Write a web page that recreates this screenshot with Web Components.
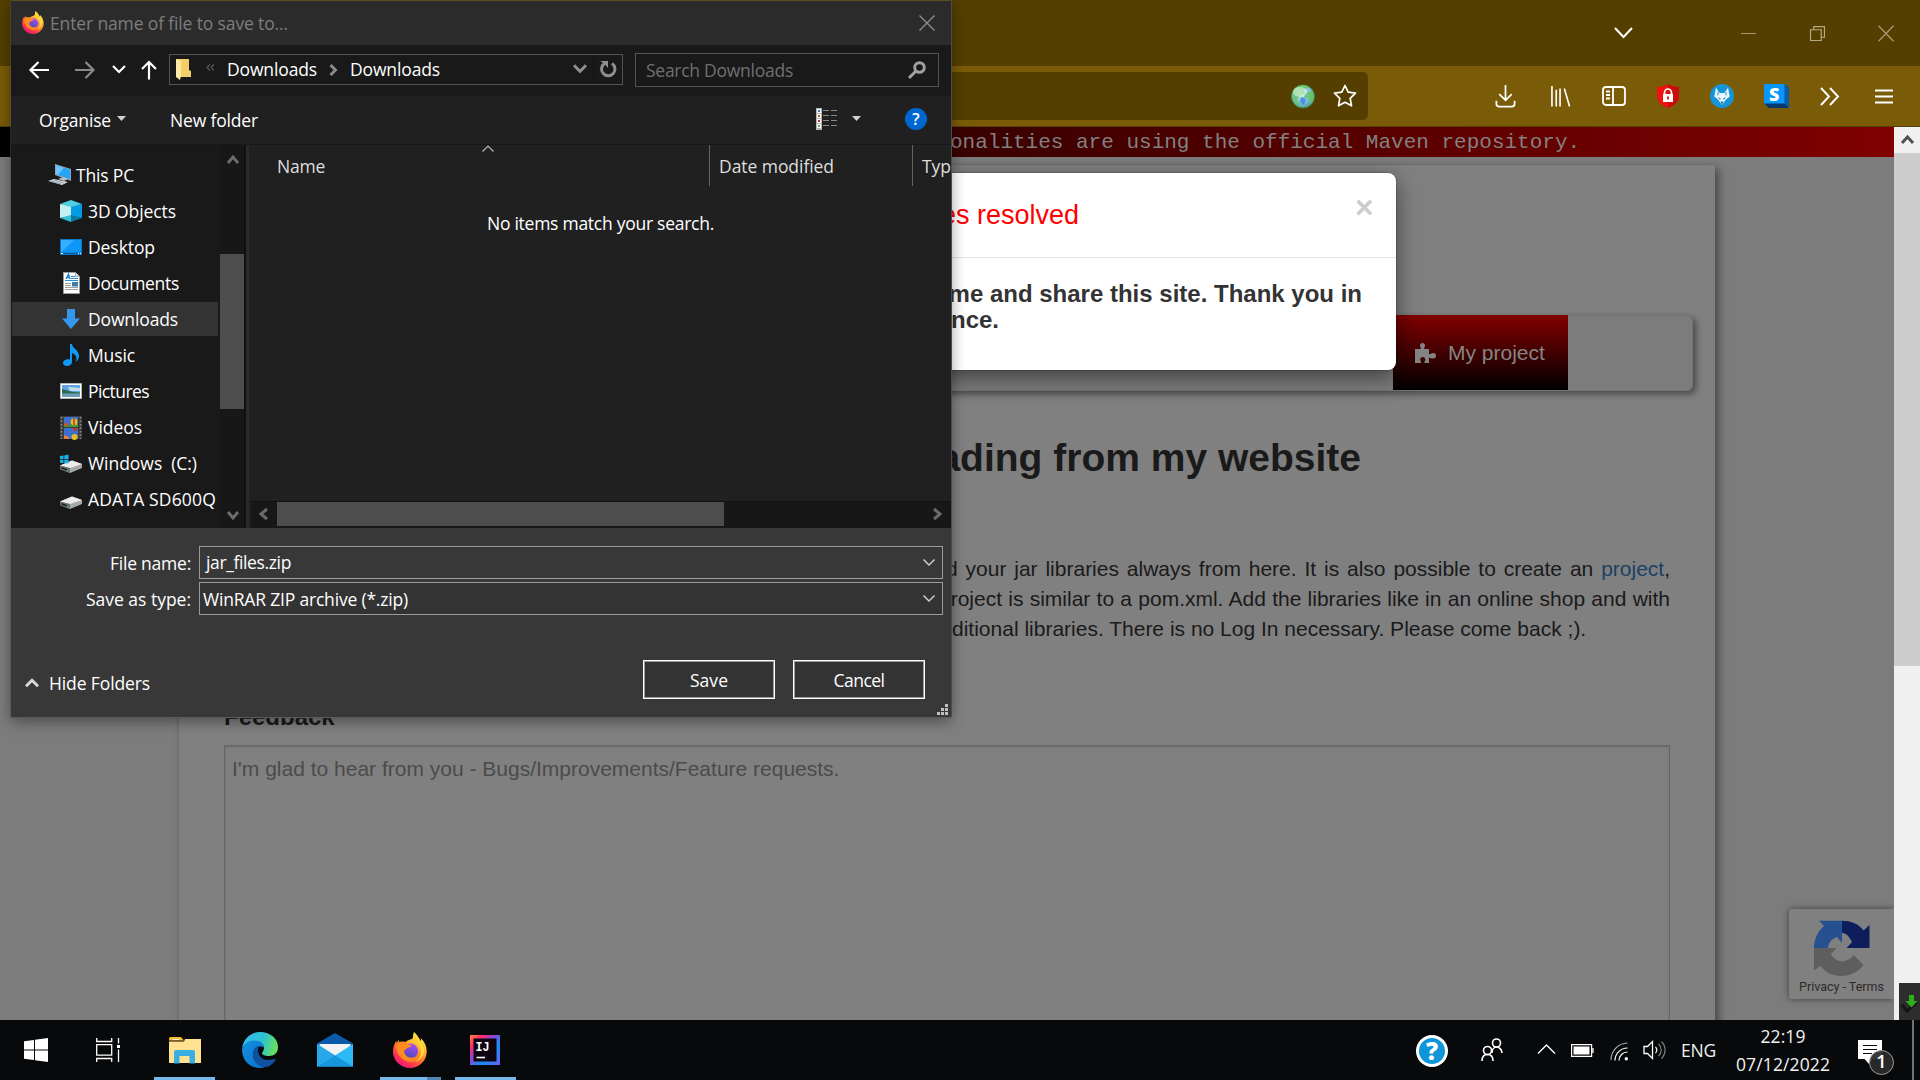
<!DOCTYPE html>
<html lang="en">
<head>
<meta charset="utf-8">
<title>Save file</title>
<style>
html,body{margin:0;width:1920px;height:1080px;overflow:hidden;background:#07090b}
body{font-family:"Open Sans","Noto Sans",sans-serif;font-size:17.5px}
</style>
</head>
<body>
<desk-top></desk-top>
<script>
const define = (name, html) => {
  const t = document.createElement('template');
  t.innerHTML = '<style>*{box-sizing:border-box}:host{box-sizing:border-box}</style>' + html;
  customElements.define(name, class extends HTMLElement {
    constructor() {
      super();
      this.attachShadow({mode: 'open'}).appendChild(t.content.cloneNode(true));
    }
  });
};

const fox = `<svg viewBox="0 0 34 36"><defs>
<linearGradient id="a" x1=".85" y1="0" x2=".2" y2="1"><stop offset="0" stop-color="#fff44f"/><stop offset=".3" stop-color="#ffc130"/><stop offset=".55" stop-color="#ff7a28"/><stop offset=".8" stop-color="#ff2f52"/><stop offset="1" stop-color="#d9118c"/></linearGradient>
<linearGradient id="b" x1=".7" y1="0" x2=".3" y2="1"><stop offset="0" stop-color="#a84cf5"/><stop offset="1" stop-color="#4a4bb8"/></linearGradient></defs>
<path d="M21 0C25 3 26 7 28 9c0-2-.3-3-.3-3 4 4 6 8 6 13.500C33.700 29 26 36 17 36S0 29 0 19.500C0 15 1.500 11 3.500 8.500c0 1.500.2 2.500.2 2.500L6 7.500c-.2 1.800 0 2.500 0 2.500 2-.6 4-.3 6 .5C15 7 20 8 20 5c0-2 .3-3.500 1-5z" fill="url(#a)"/>
<circle cx="17.500" cy="19" r="7.600" fill="url(#b)"/>
<path d="M3 14c2-4 7-5.500 10.500-3.500C14.500 12.500 17 13 19 13c-.5 2-3.500 2.500-5 3.200-1 .6-1.200 2-3 2.300 0 4 3.500 7.500 8 7.200 4-.3 6-3 7.500-3-1.500 5-5.500 7.500-10 7C9 29 4 23 3 14z" fill="#ff8a1f"/>
<path d="M24 9c4 4 5 9 3.500 14-1.600 4-4 6-6 7 5-1 9-5 9.500-10C31.400 15 28.500 11 24 9z" fill="#ffe14a" opacity=".75"/></svg>`;
const helpQ = (f,r,fs,ring) => `<svg viewBox="0 0 34 34"><circle cx="17" cy="17" r="${r}" fill="${f}" ${ring?'stroke="#fff" stroke-width="3"':''}/><text x="17" y="${17+fs*.37}" text-anchor="middle" fill="#fff" font-family="Open Sans" font-weight="${ring?800:600}" font-size="${fs}">?</text></svg>`;
const chev = (d,c,w,vb) => `<svg viewBox="${vb}"><path d="${d}" fill="none" stroke="${c}" stroke-width="${w}"/></svg>`;
const drive = `<path d="M0 13.500 12 8.500l10 3.500v4L10 21 0 17z" fill="#a9a9a9"/><path d="M0 13.500 12 8.500l10 3.500-12 4z" fill="#ececec"/><path d="M0 13.500v3.500l10 4v-5z" fill="#6d7271"/><path d="M1.500 15.800l6.500 2.400" stroke="#1d2420" stroke-width="1.600"/><circle cx="7.500" cy="18.300" r=".8" fill="#5c5"/>`;
const ICONS = {
  fox,
  back: chev('M9.500 1 1.500 9l8 8M2 9h18','#fff',2.2,'0 0 20 18'),
  fwd: chev('M10.500 1l8 8-8 8M0 9h18','#8a8a8a',2.2,'0 0 20 18'),
  up: chev('M1 9l7-7 7 7M8 2v17.500','#fff',2.2,'0 0 16 20'),
  down: chev('M1 1l6 6 6-6','#fff',2.2,'0 0 14 9'),
  downG: chev('M1 1.300l6 6 6-6','#8f8f8f',3,'0 0 14 10'),
  upL: chev('M1 8.300l6-6 6 6','#d8d8d8',3,'0 0 14 10'),
  thin: chev('M.5.5 6 6 11.500.5','#d4d4d4',1.4,'0 0 12 8'),
  sort: chev('M.5 6.500 6 1l5.500 5.500','#b8b8b8',1.2,'0 0 12 8'),
  sbUp: chev('M1 9l5-6 5 6','#6b6b6b',3,'0 0 12 11'),
  sbDn: chev('M1 2l5 6 5-6','#6b6b6b',3,'0 0 12 11'),
  sbL: chev('M9 1 3 6l6 5','#6b6b6b',3,'0 0 11 12'),
  sbR: chev('M2 1l6 5-6 5','#6b6b6b',3,'0 0 11 12'),
  crumb: chev('M1.500 1l5 5-5 5','#8a8a8a',3,'0 0 9 12'),
  lt2: chev('M4 .5 1 3.500l3 3M8 .5 5 3.500l3 3','#5c5c5c',1.1,'0 0 9 7'),
  x: chev('M.5.5l15 15M15.500.5l-15 15','#909090',1.2,'0 0 16 16'),
  xw: chev('M.5.500l15 15.500M15.500.5.500 16','#a89a70',1.3,'0 0 16 16.500'),
  refresh: `<svg viewBox="0 0 17 18"><path d="M12 3.500a6.700 6.700 0 1 1-7.500 0" fill="none" stroke="#8f8f8f" stroke-width="3"/><path d="M.5 1h7.500v7L5.500 5z" fill="#8f8f8f"/></svg>`,
  search: `<svg viewBox="0 0 18 18"><circle cx="11.500" cy="6.500" r="4.800" fill="none" stroke="#a0a0a0" stroke-width="3"/><path d="M8 10 1 17" stroke="#a0a0a0" stroke-width="3"/></svg>`,
  folder: `<svg viewBox="0 0 15 21"><path d="M0 0h13v11l2 1v6H4z" fill="#f3cf69"/><path d="M0 0l5 2v15l-1 4-4-3z" fill="#ffe9a6"/></svg>`,
  caret: `<svg viewBox="0 0 9 5"><path d="M0 0h9L4.500 5z" fill="#d0d0d0"/></svg>`,
  view: `<svg viewBox="0 0 22 22"><path d="M0 0h6v22H0z" fill="#b4b4b4"/><path d="M1 1h4v4H1zM1 6h4v4H1zM1 11h4v4H1zM1 16h4v4H1z" fill="#fff"/><path d="M2 2h2v2H2z" fill="#3779b5"/><path d="M2 7h2v2H2z" fill="#9a6a30"/><path d="M2 12h2v2H2z" fill="#c03020"/><path d="M2 17h2v2H2z" fill="#7ca45c"/><path d="M7 2.500h6m2 0h6M7 7.500h6m2 0h6M7 12.500h6m2 0h6M7 17.500h6m2 0h6" stroke="#8b8b8b"/></svg>`,
  help: helpQ('#0067d0',17,25,false),
  pc: `<svg viewBox="0 0 23 22"><path d="M7 0l16 5v12L7 11z" fill="#8fa6b8"/><path d="M8 1.300l14 4.400v9.500L8 10z" fill="#27a3f7"/><path d="M8 1.300l8 2.500-6 7L8 10z" fill="#6cc4fb"/><path d="M10 15l5-2 5 2-4 2z" fill="#b5bcc4"/><path d="M0 17l6-2 14 3-6 3z" fill="#d7dde2"/><path d="M3 17l10 3M6 16l10 3" stroke="#7e8890" stroke-width=".8"/></svg>`,
  cube: `<svg viewBox="0 0 22 22"><path d="M0 4 11 0l11 4-11 4z" fill="#4fd0e2"/><path d="M0 4l11 3v9L0 18z" fill="#c4f0f3"/><path d="M22 4 11 7v9l11 2z" fill="#049be0"/><path d="M0 18l11-3v7z" fill="#33bfd4"/><path d="M22 18l-11-3v7z" fill="#067a9f"/></svg>`,
  desk: `<svg viewBox="0 0 22 16"><path d="M0 0h22v16H0z" fill="#0b76c6"/><path d="M1 1h20v12.500H1z" fill="#0d97fb"/><path d="M1 13.500V1h13z" fill="#35aefe"/><path d="M1 14h20v1H1z" fill="#045a9d"/><path d="M1 14h2v1H1zM18 14h1v1h-1zM20 14h1v1h-1z" fill="#fff"/></svg>`,
  doc: `<svg viewBox="0 0 17 22"><path d="M.5.500h12l4 4v17H.5z" fill="#fff" stroke="#9b9b9b"/><path d="M12.500.5v4h4" fill="#ddd" stroke="#999" stroke-width=".7"/><path d="M3 7 5.500 2 7 7M4 5.500h3" stroke="#1c7ed0" stroke-width="1.300" fill="none"/><path d="M8 4.500h4M8 6.500h7M2 8.500h13" stroke="#2b8fd8"/><path d="M2 11.500h6m-6 2h6m-6 2h13m-13 2h13" stroke="#a0a0a0"/><path d="M9 10h6v4.500H9z" fill="#3d7eae"/></svg>`,
  dl: `<svg viewBox="0 0 18 20"><path d="M5 0h8v9.500h5L9 20 0 9.500h5z" fill="#3398ec"/></svg>`,
  music: `<svg viewBox="0 0 17 22"><path d="M7 0h2c0 4 7 6 7 12 0 2-1 4-3 6 1-5 .5-7-4-9v8.500C9 20.500 6.500 22 4 22c-2.300 0-4-1-4-3 0-2.500 3.500-4.500 7-3.500z" fill="#0d99f5"/></svg>`,
  pic: `<svg viewBox="0 0 22 16"><path d="M.5.500h21v15H.5z" fill="#fff" stroke="#b5b5b5"/><path d="M2 2h18v12H2z" fill="#5fa5e4"/><path d="M8 4l12 1v3H10z" fill="#c3def2"/><path d="M2 6c5 1 8 3 18 3.500V11H2z" fill="#2e6b4e"/><path d="M2 10.500h18V14H2z" fill="#6e9fb5"/></svg>`,
  vid: `<svg viewBox="0 0 22 23"><path d="M0 0h22v23H0z" fill="#3c3c3c"/><path d="M1.500 1v22M20.500 1v22" stroke="#8a8a8a" stroke-width="1.600" stroke-dasharray="1.500 2"/><path d="M4 1h14v10H4zM4 12h14v11H4z" fill="#3c6fd0"/><path d="M4 8l3-1 3 2 8-1v3H4z" fill="#3a9a3a"/><circle cx="14" cy="6" r="3.400" fill="#e9c01a"/><path d="M14 2.600v7" stroke="#b33" stroke-width="1.500"/><circle cx="6" cy="8.500" r="1.700" fill="#e8452c"/><path d="M12 12h6l-3 4z" fill="#b83a20"/><circle cx="14.500" cy="21" r="3" fill="#e9c01a"/><path d="M4 19l5 2v2H4z" fill="#e9803c"/></svg>`,
  winc: `<svg viewBox="0 0 22 22">${drive}<path d="M0 5.500l3.500-.5v3.500H0zM4.300 4.900 8.500 4v4.500H4.300zM0 9.300h3.500v3.300L0 12.200zM4.300 9.300h4.200V13l-4.200-.6z" transform="translate(0 -1.500)" fill="#14b5ee"/></svg>`,
  drv: `<svg viewBox="0 0 22 22">${drive}</svg>`,
  grip: `<svg viewBox="0 0 11 11"><path d="M8 0h3v3H8zM4 4h3v3H4zM8 4h3v3H8zM0 8h3v3H0zM4 8h3v3H4zM8 8h3v3H8z" fill="#c0c0c0"/></svg>`,
  chevW: chev('M1 1l8.500 9L18 1','#fff',2,'0 0 19 12'),
  min: chev('M0 .5h15','#a89a70',1,'0 0 15 1'),
  restore: chev('M.5 3.500h10v10H.5zM3.500 3V.5h10v10H11','#b5a981',1.1,'0 0 14 14'),
  globe: `<svg viewBox="0 0 24 25"><defs><radialGradient id="g" cx=".4" cy=".35" r=".7"><stop offset="0" stop-color="#cdeef5"/><stop offset=".6" stop-color="#7cbfe0"/><stop offset="1" stop-color="#4d9a9c"/></radialGradient></defs><circle cx="12" cy="12.500" r="11.500" fill="url(#g)" stroke="#477f36"/><path d="M3 5c5-5 12-5 15-2l-5 3 1 4-5 2-3 4 4 6C3 21-1 12 3 5zM14 9l7-2c3 4 2 10-1 13l-3-6-4 0z" fill="#62c65c" opacity=".8"/><path d="M10 13l5 2-2 6-4-3z" fill="#4a91d6"/><ellipse cx="9" cy="8" rx="7" ry="5" fill="#fff" opacity=".45"/></svg>`,
  star: `<svg viewBox="0 0 24 24"><path d="M12 1.500l3.200 6.700 7.300 1-5.300 5.200 1.300 7.400-6.500-3.500-6.500 3.500 1.300-7.400L1.500 9.200l7.300-1z" fill="none" stroke="#fff" stroke-width="1.700" stroke-linejoin="round"/></svg>`,
  dlB: chev('M10.500 0v16M4 9.500l6.500 6.500L17 9.500M1 16.500v3a3 3 0 0 0 3 3h13a3 3 0 0 0 3-3v-3','#fff',1.800,'0 0 21 24'),
  lib: chev('M1 0v21.500M5.500 4v17.500M9.500 2.500v19M14 2.500l5.500 19','#fff',1.700,'0 0 21 22'),
  side: chev('M4 1h16a3 3 0 0 1 3 3v12a3 3 0 0 1-3 3H4a3 3 0 0 1-3-3V4a3 3 0 0 1 3-3zM11 1v18M4 5.500h4M4 9h4M4 12.500h4','#fff',1.800,'0 0 24 20'),
  shield: `<svg viewBox="0 0 22 24"><path d="M11 0c3 2 7 3 11 3v9c0 6-5 9.500-11 12C5 21.500 0 18 0 12V3c4 0 8-1 11-3z" fill="#f01010"/><path d="M11 0c3 2 7 3 11 3v9c0 6-5 9.500-11 12z" fill="#c90d0d"/><path d="M6 10h10v8H6z" fill="#fff"/><path d="M7.500 10V8.500a3.500 3.500 0 0 1 7 0V10" fill="none" stroke="#fff" stroke-width="1.700"/><path d="M11 12.500v3" stroke="#d11" stroke-width="1.800"/></svg>`,
  wolf: `<svg viewBox="0 0 24 24"><circle cx="12" cy="12" r="12" fill="#1595d8"/><path d="M6 3.500l3.500 5.500h5L18 3.500l1.700 9-3.700 3L12 21l-4-5.500-3.700-3z" fill="#e9f5fc"/><path d="M7.500 7l1.700 3-2 2zM16.500 7l-1.700 3 2 2z" fill="#58aede"/><path d="M8 13l2.700 1.500-.5 1.500zM16 13l-2.700 1.500.5 1.500zM12 21l-1.500-3.500h3z" fill="#1b6ca3"/></svg>`,
  sIcon: `<svg viewBox="0 0 25 24"><path d="M0 0h20l5 3.500V24H5L0 19.500z" fill="#075cad"/><path d="M5 24l-5-5h20l5 5z" fill="#06386b"/><path d="M0 0h20.500v19.500H0z" fill="#0796fb"/><text x="10.300" y="16.500" text-anchor="middle" font-family="Open Sans" font-weight="800" font-size="18" fill="#fff">S</text></svg>`,
  more: chev('M1 1l8 8.500L1 18M10 1l8 8.500L10 18','#fff',1.900,'0 0 20 19'),
  menu: chev('M0 1.500h18M0 7.500h18M0 13.500h18','#fff',1.900,'0 0 18 15'),
  pgUp: chev('M1 9l5.500-6L12 9','#505050',3,'0 0 13 11'),
  puzzle: `<svg viewBox="0 0 21 20"><path d="M0 6h5.500C6.500 5 5 4 5 2.500 5 1 6 0 7.500 0S10 1 10 2.500C10 4 8.500 5 9.500 6H14v5c1 1 2-1 4-1 2 0 3 1 3 2.700S20 15.500 18 15.500c-2 0-3-1.500-4-.5v5H9.500c-.5-1 .8-2 .8-3.500S9.200 14 7.800 14s-2.600 1-2.600 2.500S6.500 19 6 20H0z" fill="#848484"/></svg>`,
  captcha: `<svg viewBox="0 0 56 56"><path d="M5 .7h23V23l-5-6c-5 2-8.500 5-9 11H0C0 19 4 11 10 6z" fill="#26508f"/><path d="M28 .7C37 .7 45 4 49.500 10.500l6-5.500v23h-23l5.500-6c-2-4-5-9-10-9z" fill="#0e1d5c"/><path d="M0 28h22.500L17 34c5 10 17 9 22.500 1l10 10C38 60 16 59 6.500 46L0 50.500z" fill="#5e5e5e"/></svg>`,
  green: `<svg viewBox="0 0 21 37"><path d="M3 22l5 6 10-9" fill="none" stroke="#151515" stroke-width="3"/><path d="M10 12h5v6h3.500l-6 6.500-6-6.500H10z" fill="#2eae1d"/></svg>`,
  win: `<svg viewBox="0 0 24 24"><path d="M0 3.300 10 2v9.500H0zM11 1.800 24 0v11.500H11zM0 12.500h10V22L0 20.700zM11 12.500h13V24l-13-1.800z" fill="#fff"/></svg>`,
  task: `<svg viewBox="0 0 24 24"><path d="M.7 0v3.500h15V0M.7 24v-3.500h15V24M.7 6.700h15v10.500H.7zM22.500 0v5.500M22.500 11.500V24" fill="none" stroke="#fff" stroke-width="1.300"/><path d="M21 7h3v3h-3z" fill="#fff"/></svg>`,
  exp: `<svg viewBox="0 0 32 27"><path d="M0 1.500Q0 0 1.500 0H12l3 3.500H0z" fill="#f7bd2d"/><path d="M0 4.500h15L16 2h16v24H0z" fill="#ffe291"/><path d="M4 2.500h6" stroke="#fff"/><path d="M5 26.500V15q0-2 2-2h17q2 0 2 2v11.500h-5.500V19h-10v7.500z" fill="#3aaee2"/></svg>`,
  edge: `<svg viewBox="0 0 36 36"><defs><linearGradient id="e" x1="0" y1=".3" x2="1" y2=".5"><stop offset="0" stop-color="#35b8f3"/><stop offset=".55" stop-color="#2cc3d0"/><stop offset="1" stop-color="#6be05a"/></linearGradient><linearGradient id="f" x1="0" y1="0" x2="1" y2="1"><stop offset="0" stop-color="#1690df"/><stop offset="1" stop-color="#0672cc"/></linearGradient></defs><path d="M0 16C2 6 9 0 18 0c11 0 18 7 18 15 0 6-4 9-9 9-4 0-7-1-7-3 0-1 2-2 2-5 0-4-4-7-9-7-6 0-10 3-13 7z" fill="url(#e)"/><path d="M0 17c2-6 7-8.500 12-8.500 6 0 10 3 10 7-6-3-11 2-11 7 0 6 5 12 13 12-2 1-4 1.500-6 1.500C7 36 0 28 0 17z" fill="url(#f)"/><path d="M11 22c0-5 3-8 6-8-3 6 1 14 9 14 3 0 5-1 7-1 .7 0 .7.700.3 1.200C31 32 27 35 23 35 16 35 11 29 11 22z" fill="#10509c"/></svg>`,
  mail: `<svg viewBox="0 0 36 34"><path d="M0 10.500 18 0l18 10.500V20H0z" fill="#0a5cab"/><path d="M2.500 11h31v8L18 28 2.500 19z" fill="#f3f3f3"/><path d="M0 11l18 11.500L36 11v22.500H0z" fill="#2db9f3"/><path d="M0 33.500 18 22.500l18 11z" fill="#1795dd"/><path d="M0 11l18 11.500-18 11z" fill="#28a8ea"/></svg>`,
  ij: `<svg viewBox="0 0 30 30"><defs><linearGradient id="j" x1="0" y1="0" x2="1" y2="1"><stop offset="0" stop-color="#fd8a34"/><stop offset=".22" stop-color="#fe2b6e"/><stop offset=".42" stop-color="#8c45d8"/><stop offset=".65" stop-color="#1490f5"/><stop offset="1" stop-color="#6f5ef5"/></linearGradient></defs><path d="M0 0h30v30H0z" fill="url(#j)"/><path d="M3.500 3.500h23v23h-23z" fill="#0c0410"/><path d="M6.500 22.500h8.500" stroke="#fff" stroke-width="1.600"/><text x="5.500" y="15.500" font-family="Liberation Mono" font-weight="700" font-size="13" textLength="14" lengthAdjust="spacingAndGlyphs" fill="#fff">IJ</text></svg>`,
  help2: helpQ('#0e96d8',14.500,24,true),
  people: `<svg viewBox="0 0 22 24"><g fill="none" stroke="#fff" stroke-width="1.600"><circle cx="15.500" cy="5" r="4"/><circle cx="6.500" cy="12.500" r="4"/><path d="M11 15c0-3.500 2-6 4.500-6s5.500 2.500 5.500 6M1 23c0-4 2-6.500 5.500-6.500S12 19 12 23"/></g></svg>`,
  trayUp: chev('M1 9.500 9.500 1 18 9.500','#fff',1.400,'0 0 19 11'),
  bat: `<svg viewBox="0 0 23 13"><path d="M.6.600h20v11.800H.6zM22 4v5" fill="none" stroke="#fff" stroke-width="1.200"/><path d="M2.500 2.500h16v8h-16z" fill="#fff"/></svg>`,
  wifi: `<svg viewBox="0 0 18 19"><g fill="none" stroke="#fff" stroke-width="1.200"><path d="M9 18.500a8.500 8.500 0 0 1 8.500-8.500"/><path d="M5 18.500A12.500 12.500 0 0 1 17.500 6"/><path d="M1 18A17 17 0 0 1 17.500 1" stroke="#aaa"/></g><circle cx="16.300" cy="16.800" r="1.700" fill="#fff"/></svg>`,
  vol: `<svg viewBox="0 0 23 20"><path d="M1 6.500h3.500L9.500 1.500v17l-5-5H1z" fill="none" stroke="#fff" stroke-width="1.300"/><path d="M12.500 7a4.500 4.500 0 0 1 0 6" fill="none" stroke="#fff" stroke-width="1.200"/><path d="M15.500 4a8 8 0 0 1 0 12M18.500 1.500a12 12 0 0 1 0 17" fill="none" stroke="#808080" stroke-width="1.200"/></svg>`,
  note: `<svg viewBox="0 0 24 24"><path d="M0 0h24v19H15l-4 5-4.500-5H0z" fill="#fff"/><path d="M5 5.500h14M5 9.500h14M5 13.500h9" stroke="#07090b" stroke-width="1.200"/></svg>`
};
customElements.define('ui-icon', class extends HTMLElement {
  constructor() { super(); this.attachShadow({mode: 'open'}); }
  connectedCallback() {
    const w = this.getAttribute('w'), h = this.getAttribute('h');
    this.shadowRoot.innerHTML = `<style>:host{display:block;flex:none;width:${w}px;height:${h}px}svg{display:block;width:100%;height:100%;overflow:visible}</style>` + ICONS[this.getAttribute('name')];
  }
});

define('task-app', `<style>:host{display:flex;flex-direction:column;flex:none;width:75px;height:60px;align-items:center}
.i{flex:1;display:flex;align-items:center;padding-top:3px}.b{width:61px;height:3px;background:var(--bar,transparent)}</style>
<div class="i"><slot></slot></div><div class="b"></div>`);

define('task-bar', `<style>:host{display:flex;height:60px;flex:none;background:#07090b;color:#f2f2f2;align-items:center}
.l{display:flex}.r{display:flex;align-items:center;margin-left:auto;height:60px}
.clock{display:flex;flex-direction:column;align-items:center;width:94px;margin-left:20px}
.clock fit-text{line-height:28px}
.n{position:relative;margin-left:28px;margin-top:3px}
.bd{position:absolute;left:11px;top:10px;width:25px;height:25px;border-radius:50%;background:#2b2b2bee;border:1.500px solid #9a9a9a;font:600 18px/21px "Open Sans";text-align:center;color:#fff}
.s{width:2px;height:60px;background:#6f7275;margin-left:30px;margin-right:6px}</style>
<div class="l"><task-app style="width:72px"><ui-icon name="win" w="24" h="24"></ui-icon></task-app>
<task-app style="width:71px"><ui-icon name="task" w="24" h="24"></ui-icon></task-app>
<task-app style="width:83px;--bar:#76b9ed"><ui-icon name="exp" w="32" h="27"></ui-icon></task-app>
<task-app style="width:68px"><ui-icon name="edge" w="36" h="36"></ui-icon></task-app>
<task-app style="width:82px"><ui-icon name="mail" w="36" h="34"></ui-icon></task-app>
<task-app style="width:68px;--bar:linear-gradient(90deg,#76b9ed 47px,#5286b0 47px)"><ui-icon name="fox" w="34" h="36"></ui-icon></task-app>
<task-app style="width:82px;--bar:#76b9ed"><ui-icon name="ij" w="30" h="30"></ui-icon></task-app></div>
<div class="r"><ui-icon name="help2" w="34" h="34" style="margin-top:2px"></ui-icon>
<ui-icon name="people" w="22" h="24" style="margin-left:32px"></ui-icon>
<ui-icon name="trayUp" w="19" h="11" style="margin-left:34px;margin-top:-2px"></ui-icon>
<ui-icon name="bat" w="23" h="13" style="margin-left:15px"></ui-icon>
<ui-icon name="wifi" w="18" h="19" style="margin-left:16px;margin-top:2px"></ui-icon>
<ui-icon name="vol" w="23" h="20" style="margin-left:15px"></ui-icon>
<fit-text w="35" style="margin-left:15px">ENG</fit-text>
<div class="clock"><fit-text w="45">22:19</fit-text><fit-text w="94">07/12/2022</fit-text></div>
<div class="n"><ui-icon name="note" w="24" h="24"></ui-icon><div class="bd">1</div></div><div class="s"></div></div>`);

define('browser-chrome', `<style>:host{display:block;flex:none;height:127px;background:#7a5c08;border-bottom:1px solid #54400a}
.t{height:66px;background:#543f00;display:flex;align-items:center;justify-content:flex-end;padding-right:26px}
.b{height:60px;display:flex;align-items:center;padding-right:27px;justify-content:flex-end}
.u{width:468px;height:48px;border-radius:5px;background:#543f00;display:flex;align-items:center;justify-content:flex-end;padding-right:11px;gap:18px;margin-right:127px}
</style>
<div class="t"><ui-icon name="chevW" w="19" h="12"></ui-icon><ui-icon name="min" w="15" h="1" style="margin-left:108px"></ui-icon><ui-icon name="restore" w="15" h="15" style="margin-left:54px"></ui-icon><ui-icon name="xw" w="16" h="17" style="margin-left:53px"></ui-icon></div>
<div class="b"><div class="u"><ui-icon name="globe" w="24" h="25"></ui-icon><ui-icon name="star" w="24" h="24"></ui-icon></div>
<ui-icon name="dlB" w="21" h="23"></ui-icon><ui-icon name="lib" w="20" h="21" style="margin-left:35px"></ui-icon><ui-icon name="side" w="24" h="20" style="margin-left:31px"></ui-icon><ui-icon name="shield" w="22" h="24" style="margin-left:31px"></ui-icon><ui-icon name="wolf" w="24" h="24" style="margin-left:31px"></ui-icon><ui-icon name="sIcon" w="25" h="24" style="margin-left:30px"></ui-icon><ui-icon name="more" w="20" h="19" style="margin-left:31px"></ui-icon><ui-icon name="menu" w="18" h="15" style="margin-left:35px"></ui-icon></div>`);

define('page-scroll', `<style>:host{display:flex;flex-direction:column;flex:none;width:26px;background:#f0f0f0;position:relative}
.u{height:26px;display:flex;align-items:center;justify-content:center;padding-bottom:2px}.t{height:513px;background:#cdcdcd}
.g{position:absolute;right:0;bottom:0;background:#2d2d2d}</style>
<div class="u"><ui-icon name="pgUp" w="13" h="11"></ui-icon></div><div class="t"></div><ui-icon class="g" name="green" w="21" h="37"></ui-icon>`);

define('info-modal', `<style>:host{display:block;width:900px;height:197px;background:#fff;border-radius:8px;box-shadow:0 7px 22px rgba(0,0,0,.5),0 0 0 1px rgba(0,0,0,.15)}
.h{height:85px;border-bottom:1px solid #e5e5e5;display:flex;justify-content:flex-end;padding-right:23px}
.t{font-size:27px;line-height:38px;color:#f00;margin:23px 276px 0 0}
.x{font:bold 31.500px/32px "Liberation Sans";color:#ccc;width:18px;margin-top:18px}
.b{font-weight:bold;font-size:24px;line-height:26.400px;color:#333;text-align:right;padding-top:23px}
.b div{padding-right:34px}.b div+div{padding-right:397px}</style>
<div class="h"><div class="t">es resolved</div><div class="x">×</div></div>
<div class="b"><div>me and share this site. Thank you in</div><div>nce.</div></div>`);

define('captcha-badge', `<style>:host{display:flex;flex-direction:column;width:105px;height:90px;background:#808080;border-radius:3px 0 0 3px;box-shadow:0 0 6px #3c3c3c;align-items:center;padding:11px 0 0 0}
fit-text{font:12.500px/18px Roboto;color:#2b2b2b;margin-top:2px}</style>
<ui-icon name="captcha" w="56" h="56"></ui-icon><fit-text w="85">Privacy - Terms</fit-text>`);

define('site-card', `<style>:host{display:block;width:1536px;height:900px;margin:8px 0 0 179px;padding:1px 45px 0;background:#808080;box-shadow:4px 4px 8px #4b4b4b,0 0 3px #6a6a6a;color:#1a1a1a}
.n{height:76px;margin:149px -23px 0 -22px;border:1px solid #737373;border-radius:6px;background:#7c7c7c;box-shadow:3px 3px 7px #484848;display:flex;justify-content:flex-end;padding-right:124px}
.p{width:175px;height:75px;margin-top:-1px;background:linear-gradient(#820000,#000);color:#858585;display:flex;align-items:center;padding-left:22px;gap:12px}
h1{font-size:39px;line-height:40px;margin:47px 309px 0 0;text-align:right}
.l{font-size:21px;line-height:30px;margin-left:auto;text-align-last:justify;white-space:nowrap}
.bl{color:#1a4164}h2{font-size:24px;line-height:26px;margin:60px 0 15px}
.a{height:400px;border:1px solid #656565;box-shadow:inset 0 1px 2px #6c6c6c;padding:8px 8px 8px 7px;line-height:30px;color:#4b4b4b}</style>
<div class="n"><div class="p"><ui-icon name="puzzle" w="21" h="20"></ui-icon>My project</div></div>
<h1>ading from my website</h1>
<div class="l" style="width:724px;margin-top:76px">d your jar libraries always from here. It is also possible to create an <span class="bl">project</span>,</div>
<div class="l" style="width:731px"><span class="bl">p</span>roject is similar to a pom.xml. Add the libraries like in an online shop and with</div>
<div class="l" style="width:718px;text-align-last:left">ditional libraries. There is no Log In necessary. Please come back ;).</div>
<h2>Feedback</h2><div class="a">I'm glad to hear from you - Bugs/Improvements/Feature requests.</div>`);

define('web-page', `<style>:host{display:flex;flex:1;min-height:0;background:#7c7c7c;font-family:"Liberation Sans",Arial,sans-serif;font-size:21px;position:relative}
.v{flex:1;overflow:hidden;position:relative}
.m{height:30px;background:linear-gradient(90deg,#000 200px,#800000);font:21px/31px "Liberation Mono";color:#828080;padding-left:950px;white-space:pre;position:relative;z-index:1}
info-modal{position:absolute;left:496px;top:46px;z-index:2}captcha-badge{position:absolute;right:0;top:782px}</style>
<div class="v"><div class="m">onalities are using the official Maven repository.</div><site-card></site-card><info-modal></info-modal><captcha-badge></captcha-badge></div><page-scroll></page-scroll>`);

define('tree-row', `<style>:host{display:flex;align-items:center;height:36px;padding-left:49px}
.i{width:22px;margin-right:6px;display:flex;justify-content:center}</style>
<div class="i"><slot name="icon"></slot></div><slot></slot>`);

const row = (ic,w,h,tw,t,st='') => `<tree-row style="${st}"><ui-icon slot="icon" name="${ic}" w="${w}" h="${h}"></ui-icon><fit-text w="${tw}">${t}</fit-text></tree-row>`;
define('folder-tree', `<style>:host{display:flex;width:235px;background:#191919;flex:none;border-right:2px solid #101010}
.t{width:209px;padding:12px 2px 0 0;overflow:hidden}
.s{width:24px;background:#171717;display:flex;flex-direction:column;align-items:center;padding:9px 0 7px}
.th{width:24px;height:155px;background:#4d4d4d;margin:89px 0 auto}</style>
<div class="t">${row('pc',23,22,58,'This PC','padding-left:37px')}${row('cube',22,22,88,'3D Objects')}${row('desk',22,16,67,'Desktop')}${row('doc',17,22,91,'Documents')}${row('dl',18,20,90,'Downloads','height:34px;margin:1px 0 1px 1px;padding-left:48px;background:#333')}${row('music',17,22,47,'Music')}${row('pic',22,16,61,'Pictures')}${row('vid',22,23,54,'Videos')}${row('winc',22,22,109,'Windows &nbsp;(C:)')}${row('drv',22,22,128,'ADATA SD600Q')}</div>
<div class="s"><ui-icon name="sbUp" w="12" h="11" style="margin-left:1px"></ui-icon><div class="th"></div><ui-icon name="sbDn" w="12" h="11" style="margin-left:1px"></ui-icon></div>`);

define('file-list', `<style>:host{display:flex;flex-direction:column;flex:1;min-width:0;background:#202020;border-left:3px solid #2a2a2a;overflow:hidden}
.h{height:41px;display:flex;color:#dedede;overflow:hidden;line-height:43px;flex:none}
.h>div{display:flex;border-right:1px solid #636363;flex:none}
.e{flex:1;padding-top:25px;line-height:24px}.e fit-text{margin-left:238px}
.s{height:27px;margin-left:2px;background:#171717;display:flex;align-items:flex-start;border-top:1px solid #111}
.s ui-icon{margin-top:6px}
.th{width:447px;height:24px;background:#4d4d4d}</style>
<div class="h"><div style="width:461px;padding-left:28px"><fit-text w="48">Name</fit-text><ui-icon name="sort" w="12" h="8" style="margin-left:157px"></ui-icon></div><div style="width:203px;padding-left:9px"><fit-text w="115">Date modified</fit-text></div><div style="border:0;padding-left:9px"><fit-text w="29">Typ</fit-text></div></div>
<div class="e"><fit-text w="227">No items match your search.</fit-text></div>
<div class="s"><ui-icon name="sbL" w="11" h="12" style="margin-left:7px;margin-right:8px"></ui-icon><div class="th"></div><ui-icon name="sbR" w="11" h="12" style="margin-left:208px"></ui-icon></div>`);

define('form-field', `<style>:host{display:flex;align-items:center;height:33px}
.l{width:180px;display:flex;justify-content:flex-end;margin-right:8px;padding-top:1px}
.f{width:744px;height:33px;border:1px solid #9b9b9b;background:var(--bg);display:flex;align-items:center;justify-content:space-between;padding:0 7px 0 var(--pad)}</style>
<div class="l"><slot name="label"></slot></div><div class="f"><slot></slot><ui-icon name="thin" w="12" h="8"></ui-icon></div>`);

define('push-button', `<style>:host{display:flex;align-items:center;justify-content:center;width:132px;height:39px;background:#333;border:1px solid #fff;box-shadow:inset 0 0 0 1px #9b9b9b;padding-top:1px}</style><slot></slot>`);

define('save-dialog', `<style>:host{display:flex;flex-direction:column;width:940px;height:717px;background:#383838;color:#fff;border-top:1px solid #5c4d1f;box-shadow:0 1px 1px #5a5a5a,1px 0 0 #4a4a4a,-1px 0 0 #4a4a4a66,0 4px 14px rgba(0,0,0,.42);white-space:nowrap}
.t{height:44px;flex:none;background:#2b2b2b;display:flex;align-items:center;padding:0 16px 0 11px;color:#7d7d7d}
.n{height:51px;flex:none;background:#191919;display:flex;align-items:center;padding-left:18px;padding-bottom:2px}
.c{height:48px;flex:none;background:#202020;display:flex;align-items:center;padding-left:28px}
.m{height:384px;flex:none;display:flex;border-top:1px solid #171717}
.a{width:454px;height:31px;border:1px solid #535353;margin-left:12px;display:flex;align-items:center;padding-left:6px;margin-top:-1px}
.a i{width:1px;height:29px;background:#131313;margin:0 6px 0 6px}
.q{width:304px;height:34px;border:1px solid #535353;margin-left:12px;display:flex;align-items:center;padding:0 12px 0 10px;justify-content:space-between;color:#707070}
.f{padding-top:18px;display:flex;flex-direction:column;gap:3px}
.b{display:flex;align-items:center;padding:45px 0 0 14px}
.g{align-self:flex-end;margin:5px 3px 0 0}</style>
<div class="t"><ui-icon name="fox" w="22" h="23" style="margin-top:-2px"></ui-icon><fit-text w="238" style="margin-left:6px;margin-top:-1px">Enter name of file to save to...</fit-text><ui-icon name="x" w="16" h="16" style="margin-left:auto"></ui-icon></div>
<div class="n"><ui-icon name="back" w="20" h="18"></ui-icon><ui-icon name="fwd" w="20" h="18" style="margin-left:26px"></ui-icon><ui-icon name="down" w="14" h="9" style="margin-left:17px"></ui-icon><ui-icon name="up" w="16" h="20" style="margin-left:15px"></ui-icon>
<div class="a"><ui-icon name="folder" w="15" h="21"></ui-icon><ui-icon name="lt2" w="9" h="7" style="margin:-3px 12px 0 15px"></ui-icon><fit-text w="90">Downloads</fit-text><ui-icon name="crumb" w="9" h="12" style="margin:1px 12px 0 12px"></ui-icon><fit-text w="90">Downloads</fit-text><ui-icon name="downG" w="14" h="10" style="margin-left:133px"></ui-icon><i></i><ui-icon name="refresh" w="17" h="18"></ui-icon></div>
<div class="q"><fit-text w="147">Search Downloads</fit-text><ui-icon name="search" w="18" h="18"></ui-icon></div></div>
<div class="c"><fit-text w="72">Organise</fit-text><ui-icon name="caret" w="9" h="5" style="margin:-3px 44px 0 6px"></ui-icon><fit-text w="88">New folder</fit-text><ui-icon name="view" w="22" h="22" style="margin-left:558px;margin-top:-3px"></ui-icon><ui-icon name="caret" w="9" h="5" style="margin:-3px 44px 0 14px"></ui-icon><ui-icon name="help" w="22" h="22" style="margin-top:-2px"></ui-icon></div>
<div class="m"><folder-tree></folder-tree><file-list></file-list></div>
<div class="f"><form-field style="--bg:#383838;--pad:6px"><fit-text slot="label" w="81">File name:</fit-text><fit-text w="85" style="margin-top:-2px">jar_files.zip</fit-text></form-field>
<form-field style="--bg:#333;--pad:3px"><fit-text slot="label" w="105">Save as type:</fit-text><fit-text w="205">WinRAR ZIP archive (*.zip)</fit-text></form-field></div>
<div class="b"><ui-icon name="upL" w="14" h="10" style="margin-top:6px"></ui-icon><fit-text w="101" style="margin:6px 0 0 10px">Hide Folders</fit-text><push-button style="margin-left:493px"><fit-text w="38">Save</fit-text></push-button><push-button style="margin-left:18px"><fit-text w="51">Cancel</fit-text></push-button></div>
<ui-icon class="g" name="grip" w="11" h="11"></ui-icon>`);

define('desk-top', `<style>:host{display:flex;flex-direction:column;width:1920px;height:1080px;position:relative;overflow:hidden}save-dialog{position:absolute;left:11px;top:0;z-index:5}</style>
<browser-chrome></browser-chrome><web-page></web-page><task-bar></task-bar><save-dialog></save-dialog>`);

/* Single-line label whose tracking is tuned so that the text fills the given width. */
customElements.define('fit-text', class extends HTMLElement {
  constructor() {
    super();
    this.attachShadow({mode: 'open'}).innerHTML = '<style>:host{display:block;flex:none;white-space:nowrap}span{display:inline-block}</style><span><slot></slot></span>';
  }
  connectedCallback() {
    const w = +this.getAttribute('w'), s = this.shadowRoot.querySelector('span');
    this.style.width = w + 'px';
    s.style.letterSpacing = (w - s.getBoundingClientRect().width) / this.textContent.length + 'px';
  }
});
</script>
</body>
</html>
